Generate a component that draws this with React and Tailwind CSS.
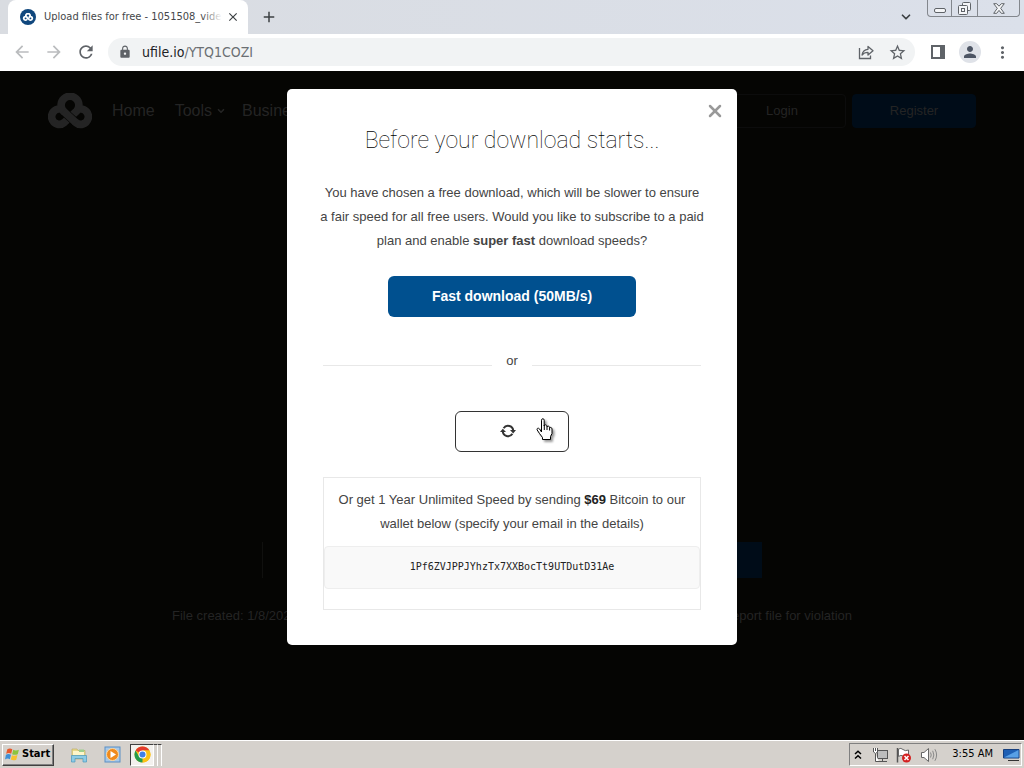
import React, { useState } from "react";
import {
  MdArrowBack,
  MdArrowForward,
  MdRefresh,
  MdLock,
  MdStarBorder,
  MdPerson,
  MdMoreVert,
  MdClose,
  MdAdd,
} from "react-icons/md";
import { LuChevronDown, LuX } from "react-icons/lu";

const Knot = ({ className, gap }) => (
  <svg viewBox="0 0 46 36" className={className} fill="none" aria-hidden="true">
    <path
      d="M13 16 A8 8 0 1 0 17 30 L30 18 A9.3 9.3 0 1 0 16 18 L29 30 A8 8 0 1 0 33 16"
      stroke="currentColor"
      strokeWidth="8"
    />
    <path d="M17 19 L28 29" stroke={gap} strokeWidth="9" />
    <path d="M16 18 L29 30" stroke="currentColor" strokeWidth="8" />
  </svg>
);

const ShareIcon = () => (
  <svg width="16" height="16" viewBox="0 0 16 16" fill="none" stroke="#5f6368" strokeWidth="1.3" aria-hidden="true">
    <path d="M1.5 4V14.5H12.5V11.5" />
    <path d="M4 11C4.5 7.5 6.5 5.5 10 5.3V2.5L15 6.8L10 11V8.3C7.5 8.3 5.5 9 4 11Z" strokeLinejoin="round" />
  </svg>
);

const SyncIcon = () => (
  <svg width="16" height="14" viewBox="0 0 16 14" fill="none" aria-hidden="true">
    <path d="M3.6 4.2A5.2 5.2 0 0 1 13.2 7M12.4 9.8A5.2 5.2 0 0 1 2.8 7" stroke="#333" strokeWidth="2" />
    <path d="M0 8L2.8 4.8L6 8ZM10 6H16L13.2 9.4Z" fill="#333" />
  </svg>
);

const HandCursor = () => (
  <svg
    width="18"
    height="23"
    viewBox="0 0 18 23"
    className="pointer-events-none absolute left-20 top-1.5 drop-shadow-[2px_2px_1px_rgba(0,0,0,0.4)]"
    aria-hidden="true"
  >
    <path
      d="M5.5 14V2.2C5.5 .2 8.2 .2 8.2 2.2V8C8.2 6.3 11 6.5 11 8.3V9C11.2 7.6 13.6 7.9 13.6 9.5V10C14 9 16 9.3 16 11V15.5L14.5 18.5V21.5H6.5V19.5L3.5 15.5L1.2 12C.4 10.4 2.4 9.4 3.6 11Z"
      fill="#fff"
      stroke="#000"
      strokeWidth="1"
    />
    <path d="M8.3 7V12M11 8.5V12M13.6 9.8V12.5" stroke="#000" />
  </svg>
);

const TabStrip = () => (
  <div className="flex h-[34px] items-start bg-linear-to-r from-[#d9dce1] to-[#dbe0ea]">
    <div className="ml-2 flex h-full w-60 items-center rounded-t-lg bg-white pl-3 pr-2">
      <span className="flex h-4 w-4 shrink-0 items-center justify-center rounded-full bg-[#10477d] text-white">
        <Knot className="h-2 w-3" gap="#10477d" />
      </span>
      <span className="relative ml-2 flex-1 whitespace-nowrap text-[11px] text-[#45474a]">
        Upload files for free - 1051508_vide
        <span className="absolute inset-y-0 right-0 w-5 bg-linear-to-r from-transparent to-white" />
      </span>
      <button aria-label="Close tab" className="ml-1 text-[#3c4043]">
        <MdClose size={14} />
      </button>
    </div>
    <button aria-label="New tab" className="ml-3 mt-2 text-[#3c4043]">
      <MdAdd size={18} />
    </button>
    <button aria-label="Search tabs" className="ml-auto mr-3.5 mt-2.5 text-[#3c4043]">
      <LuChevronDown size={14} strokeWidth={3} />
    </button>
    <div className="mr-1 flex h-[17px] overflow-hidden rounded-b border border-t-0 border-[#83878d] text-[#5f6368]">
      <button aria-label="Minimize" className="flex w-6 items-center justify-center border-r border-[#83878d]">
        <svg width="12" height="10" viewBox="0 0 12 10" fill="none" stroke="currentColor">
          <rect x=".5" y="5.5" width="11" height="4" rx="1.5" fill="#f4f5f7" />
        </svg>
      </button>
      <button aria-label="Restore" className="flex w-[26px] items-center justify-center border-r border-[#83878d]">
        <svg width="13" height="13" viewBox="0 0 13 13" fill="#f4f5f7" stroke="currentColor">
          <rect x="4.5" y=".5" width="8" height="8" rx="1" />
          <rect x=".5" y="3.5" width="9" height="9" rx="1" />
          <rect x="3.5" y="6.5" width="3" height="3" />
        </svg>
      </button>
      <button aria-label="Close" className="flex w-[41px] items-center justify-center">
        <svg width="12" height="11" viewBox="0 0 12 11" fill="#f4f5f7" stroke="currentColor">
          <path d="M.7 .7H3.7L6 3.2L8.3 .7H11.3L7.7 5.3L11.3 10.3H8.3L6 7.4L3.7 10.3H.7L4.3 5.3Z" />
        </svg>
      </button>
    </div>
  </div>
);

const Toolbar = () => (
  <div className="flex h-[37px] items-center bg-white px-3 pb-px text-[#5f6368]">
    <button aria-label="Back" className="text-[#babcbe]">
      <MdArrowBack size={20} />
    </button>
    <button aria-label="Forward" className="ml-3 text-[#babcbe]">
      <MdArrowForward size={20} />
    </button>
    <button aria-label="Reload" className="ml-3">
      <MdRefresh size={20} />
    </button>
    <div className="ml-3 flex h-7 flex-1 items-center rounded-full bg-[#f1f3f4] pl-2.5 pr-2">
      <MdLock size={14} />
      <p className="ml-2.5 flex-1 text-sm text-[#6b6f73]">
        <span className="text-[#202124]">ufile.io</span>/YTQ1COZI
      </p>
      <button aria-label="Share">
        <ShareIcon />
      </button>
      <button aria-label="Bookmark" className="ml-3.5">
        <MdStarBorder size={19} />
      </button>
    </div>
    <button aria-label="Side panel" className="ml-4">
      <svg width="14" height="14" viewBox="0 0 14 14">
        <path d="M1 1H13V13H1Z" fill="none" stroke="currentColor" strokeWidth="2" />
        <path d="M9 0H14V14H9Z" fill="currentColor" />
      </svg>
    </button>
    <button aria-label="Profile" className="ml-3.5 flex h-[22px] w-[22px] items-center justify-center rounded-full bg-[#dfe2e8] text-[#4d5564]">
      <MdPerson size={18} />
    </button>
    <button aria-label="Menu" className="ml-3">
      <MdMoreVert size={19} />
    </button>
  </div>
);

const SiteHeader = () => (
  <header className="flex h-20 items-center px-12 text-[#242424]">
    <Knot className="h-9 w-11 shrink-0" gap="#050503" />
    <nav className="ml-5 flex items-center">
      <a href="#home">Home</a>
      <a href="#tools" className="ml-5 flex items-center gap-1">
        Tools <LuChevronDown size={10} strokeWidth={4} />
      </a>
      <a href="#business" className="ml-4">Business</a>
    </nav>
    <div className="ml-auto flex gap-1.5 text-center text-[13px] leading-8">
      <a href="#login" className="w-32 rounded border border-[#0c0c0c]">Login</a>
      <a href="#register" className="w-[124px] rounded border border-[#000c18] bg-[#000c18]">Register</a>
    </div>
  </header>
);

const DownloadModal = ({ onClose }) => (
  <div className="absolute inset-0 flex items-start justify-center pt-[18px]">
    <div role="dialog" aria-labelledby="modal-title" className="relative w-[450px] rounded-[5px] bg-white px-9 pb-[35px] pt-9 text-center text-[13px] leading-6 text-[#444]">
      <button aria-label="Close" onClick={onClose} className="absolute right-3 top-3 text-[#999]">
        <LuX size={20} strokeWidth={3} />
      </button>
      <h1 id="modal-title" className="font-['Roboto',sans-serif] text-[23px] font-thin leading-8 text-black">
        Before your download starts...
      </h1>
      <p className="-mx-1 mt-6">
        You have chosen a free download, which will be slower to ensure
        <br />
        a fair speed for all free users. Would you like to subscribe to a paid
        <br />
        plan and enable <b>super fast</b> download speeds?
      </p>
      <button className="mt-[23px] h-[41px] w-62 rounded-md bg-[#00508f] pb-px text-sm font-bold text-white">
        Fast download (50MB/s)
      </button>
      <div className="mt-8 flex items-center gap-3.5">
        <hr className="mt-2 flex-1 border-[#e8e8e8]" />
        or
        <hr className="mt-2 flex-1 border-[#e8e8e8]" />
      </div>
      <button aria-label="Slow download" className="relative mx-auto mt-[38px] flex h-[41px] w-[114px] items-center justify-center rounded-md border border-[#333] pb-0.5 pr-2">
        <SyncIcon />
        <HandCursor />
      </button>
      <div className="mt-[25px] border border-[#e8e8e8] pb-5 pt-2.5">
        <p>
          Or get 1 Year Unlimited Speed by sending <b className="text-[#222]">$69</b> Bitcoin to our
          <br />
          wallet below (specify your email in the details)
        </p>
        <div className="mt-2.5 rounded border border-[#eee] bg-[#f9f9f9] pb-[9px] pt-2 font-['DejaVu_Sans_Mono',monospace] text-[10px] text-[#222]">
          1Pf6ZVJPPJYhzTx7XXBocTt9UTDutD31Ae
        </div>
      </div>
    </div>
  </div>
);

const Taskbar = () => (
  <footer className="flex h-7 items-center border-t border-white bg-[#d5d1cc] pl-0.5 pr-0.5">
    <button className="flex h-[22px] w-[52px] items-center gap-0.5 border border-b-[#404040] border-l-white border-r-[#404040] border-t-white pl-0.5 text-[11px] font-bold text-black shadow-[inset_-1px_-1px_#808080]">
      <svg width="15" height="15" viewBox="0 0 16 16" aria-hidden="true">
        <path d="M2.5 2.5Q5 .8 7.8 2.3L6.6 7.2Q4 5.8 1.2 7.3Z" fill="#e8582a" />
        <path d="M8.8 2.8Q11.5 4.4 14.8 2.8L13.6 7.6Q10.5 9 7.6 7.6Z" fill="#8cc43d" />
        <path d="M1 8.3Q3.8 6.9 6.4 8.2L5.2 13Q2.8 11.6 0 13.2Z" fill="#3d8fd6" />
        <path d="M7.4 8.7Q10.2 10.2 13.3 8.6L12 13.5Q9 15 6.2 13.4Z" fill="#f7c22e" />
      </svg>
      Start
    </button>
    <button aria-label="Explorer" className="ml-4">
      <svg width="18" height="18" viewBox="0 0 18 18">
        <path d="M2 3H7L8 4.5H15V13H2Z" fill="#e9d98c" stroke="#b9a75a" strokeWidth=".6" />
        <path d="M3 5H14V9H3Z" fill="#fff6c9" />
        <path d="M9 3.5H14V6H9Z" fill="#9dcf8f" />
        <path d="M1.5 9.5H16.5V16H13V12.5H5V16H1.5Z" fill="#8ccbe6" stroke="#4b98bd" strokeWidth=".7" />
      </svg>
    </button>
    <button aria-label="Media Player" className="ml-4">
      <svg width="18" height="18" viewBox="0 0 18 18">
        <rect x="1" y="1" width="15" height="15" fill="#a7c8e8" stroke="#5b8fc4" />
        <circle cx="8.5" cy="8.5" r="6" fill="#f08a1d" stroke="#fbd9a4" />
        <path d="M6.5 5L12 8.5L6.5 12Z" fill="#fff" />
      </svg>
    </button>
    <button aria-label="Chrome" className="ml-2 flex h-[22px] w-6 items-center justify-center border border-b-white border-l-[#404040] border-r-white border-t-[#404040] bg-[#f3f1ee]">
      <svg width="17" height="17" viewBox="0 0 18 18">
        <circle cx="9" cy="9" r="8.5" fill="#fbc116" />
        <path d="M9 9L1.64 4.75A8.5 8.5 0 0 1 16.36 4.75H9Z" fill="#e33b2e" />
        <path d="M9 9V17.5A8.5 8.5 0 0 1 1.64 4.75L5.3 11.1Z" fill="#229a4c" />
        <path d="M9 9L16.36 4.75H9L12.7 11.1L9 17.5A8.5 8.5 0 0 0 16.36 4.75Z" fill="#fbc116" />
        <circle cx="9" cy="9" r="4.2" fill="#fff" />
        <circle cx="9" cy="9" r="3.2" fill="#3f7fe8" />
      </svg>
    </button>
    <span className="h-[22px] w-1 border-r border-t border-r-white border-t-[#404040]" />
    <span className="h-[22px] w-1 border-r border-t border-r-white border-t-[#404040]" />
    <div className="ml-auto flex h-[23px] items-center border border-b-white border-l-[#808080] border-r-white border-t-[#808080] pl-1 pr-px text-black">
      <button aria-label="Show hidden icons">
        <svg width="8" height="10" viewBox="0 0 8 10" fill="none" stroke="#000" strokeWidth="1.5">
          <path d="M1 4L4 1.2L7 4M1 8.5L4 5.7L7 8.5" />
        </svg>
      </button>
      <svg width="17" height="16" viewBox="0 0 17 16" className="ml-2.5" fill="none" stroke="#555">
        <rect x="5.5" y="3.5" width="10" height="8" fill="#bdbdbd" />
        <path d="M7 14.5H15M10.5 12V14" />
        <path d="M1.5 1V5Q3.5 8 5.5 5V1M3.5 1V4M3.5 7V14.5H7" fill="#fff" />
      </svg>
      <svg width="17" height="16" viewBox="0 0 17 16" className="ml-1.5">
        <path d="M2.5 1V15.5" stroke="#555" strokeWidth="1.5" />
        <path d="M3.5 2Q6 .5 8 2.5T13.5 3V9.5Q10 10.5 8 9T3.5 9.5Z" fill="#fff" stroke="#666" />
        <circle cx="11.5" cy="11" r="4.5" fill="#d32020" />
        <path d="M9.5 9L13.5 13M13.5 9L9.5 13" stroke="#fff" strokeWidth="1.5" />
      </svg>
      <svg width="18" height="16" viewBox="0 0 18 16" className="ml-2" fill="none" stroke="#666">
        <path d="M1.5 5.5H4L8.5 1.5V14.5L4 10.5H1.5Z" fill="#fff" />
        <path d="M10.5 5.5Q12 8 10.5 10.5M12.7 3.8Q15 8 12.7 12.2M14.9 2.2Q18.3 8 14.9 13.8" stroke="#888" />
      </svg>
      <time className="ml-3.5 text-[11px]">3:55 AM</time>
      <svg width="17" height="14" viewBox="0 0 17 14" className="ml-2.5">
        <path d="M.5 1.5H16V10H.5Z" fill="#1e5fb4" stroke="#173f7d" />
        <path d="M1 9.5L15.5 2V9.5Z" fill="#58a0e6" />
        <path d="M5 12.5H16" stroke="#333" />
      </svg>
    </div>
  </footer>
);

export default function App() {
  const [open, setOpen] = useState(true);

  return (
    <div className="flex min-h-screen flex-col bg-black font-['DejaVu_Sans_Condensed','DejaVu_Sans',sans-serif]">
      <TabStrip />
      <Toolbar />
      <main className="relative flex flex-1 flex-col bg-[#050503] font-['Liberation_Sans',Arial,sans-serif]">
        <SiteHeader />
        <div className="mx-auto mt-auto flex h-9 w-full max-w-[500px] border-l border-[#10100e]">
          <button className="ml-auto w-32 bg-[#000c18] text-[13px] text-[#242424]">Download</button>
        </div>
        <div className="mx-auto mt-[26px] flex w-full max-w-[680px] justify-between pb-28 text-[13px] leading-6 text-[#242424]">
          <span>File created: 1/8/2022</span>
          <a href="#report">Report file for violation</a>
        </div>
        {open && <DownloadModal onClose={() => setOpen(false)} />}
      </main>
      <Taskbar />
    </div>
  );
}
